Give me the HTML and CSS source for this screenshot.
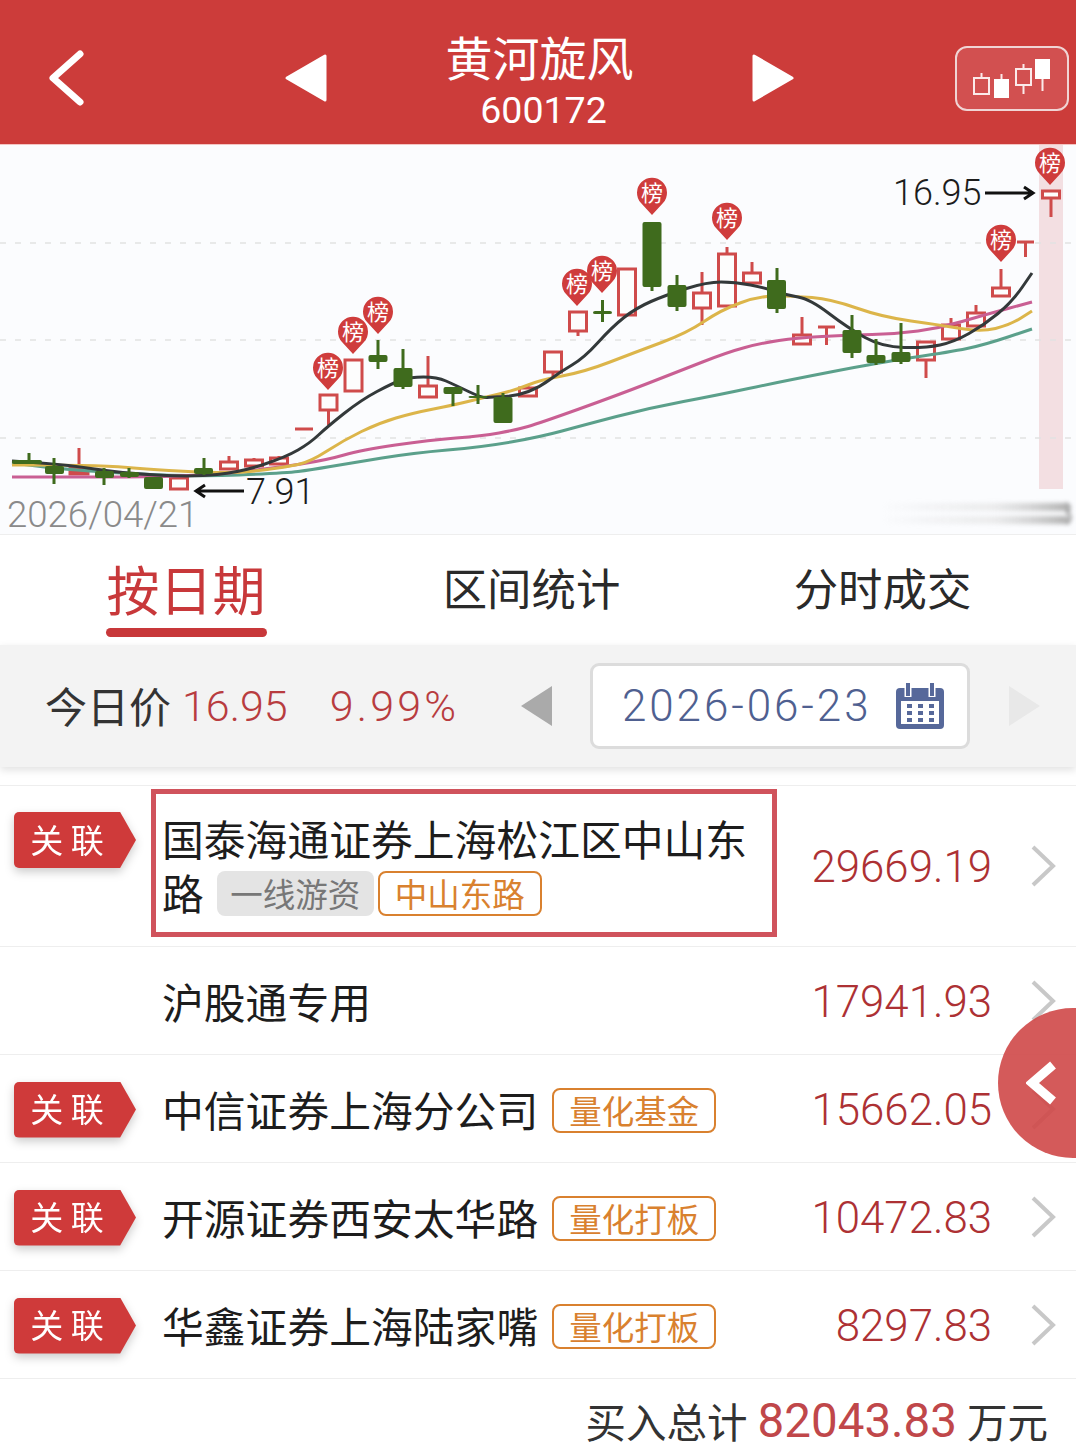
FILE: index.html
```html
<!DOCTYPE html>
<html lang="zh-CN">
<head>
    <meta charset="UTF-8">
    <meta name="viewport" content="width=device-width, initial-scale=1.0">
    <title>黄河旋风 600172</title>
    <link rel="stylesheet" href="styles.css">
</head>
<body>
    <header class="topbar">
        <svg class="back" viewBox="0 0 38 56"><path d="M33 4 6 28l27 24" /></svg>
        <svg class="tri" viewBox="0 0 43 50"><path d="M41 3v44L3 25z" /></svg>
        <div class="title">
            <div class="title-name">黄河旋风</div>
            <div class="title-code">600172</div>
        </div>
        <svg class="tri" viewBox="0 0 43 50"><path d="M2 3v44l38-22z" /></svg>
        <div class="kline-btn">
            <svg viewBox="0 0 110 61">
                <path class="kl-line" d="M24.500 25v22M44.500 26v24M66.500 16v30M85.500 20v23" />
                <rect class="kl-hollow" x="17" y="30" width="15" height="16" />
                <rect class="kl-solid" x="37" y="31" width="15" height="19" />
                <rect class="kl-hollow" x="59" y="21" width="15" height="16" />
                <rect class="kl-solid" x="78" y="11" width="15" height="20" />
            </svg>
        </div>
    </header>

    <section class="chart">
        <svg class="chart-svg" viewBox="0 145 1076 390">
            <defs>
                <linearGradient id="smear-fade">
                    <stop offset="0" stop-color="#dcdcdc" stop-opacity="0" />
                    <stop offset="0.600" stop-color="#dcdcdc" stop-opacity="0.500" />
                    <stop offset="1" stop-color="#b0b0b0" />
                </linearGradient>
            </defs>
            <rect class="band" x="1039" y="145" width="24" height="344" />
            <path class="grid" d="M0 243H1076M0 340H1076M0 438H1076" />

            <!-- candles -->
            <g class="red">
                <path d="M79 448V468M229 456V462M254 458V460M279 456V458M295 429H313M328.500 410V425M428 356V386M528 385V388M553 372V378M578 331V336M702 272V293M702 308V325M727 247V254M752 262V273M802 317V335M818 327H835M826.500 327V345M926 360V378M951 318V325M976 305V313M1001 269V288M1017 242H1034M1025.500 242V257M1051 198V217" />
                <rect class="filled" x="70" y="468" width="18" height="6" />
                <rect x="170.500" y="478" width="17" height="11" />
                <rect x="220.500" y="462" width="17" height="7" />
                <rect x="245.500" y="460" width="17" height="6" />
                <rect x="270.500" y="458" width="17" height="6" />
                <rect x="320" y="395" width="17" height="15" />
                <rect x="345" y="360" width="17" height="31" />
                <rect x="419.500" y="386" width="17" height="11" />
                <rect x="519.500" y="388" width="17" height="8" />
                <rect x="544.500" y="352" width="17" height="20" />
                <rect x="569.500" y="312" width="17" height="19" />
                <rect x="618.500" y="269" width="17" height="46" />
                <rect x="693.500" y="293" width="17" height="15" />
                <rect x="718.500" y="254" width="17" height="52" />
                <rect x="743.500" y="273" width="17" height="10" />
                <rect x="793.500" y="335" width="17" height="9" />
                <rect x="917.500" y="342" width="17" height="18" />
                <rect x="942.500" y="325" width="17" height="14" />
                <rect x="967.500" y="313" width="17" height="13" />
                <rect x="992.500" y="288" width="17" height="8" />
                <rect x="1042.500" y="191" width="17" height="7" />
            </g>

            <!-- moving averages -->
            <path class="ma ma-green" d="M12 463L40.500 466.500Q69 470 131 473.500Q193 477 239.500 475Q286 473 298 471.500Q310 470 330.500 466.500Q351 463 382 458Q413 453 447.500 450Q482 447 511 442Q540 437 562 431Q584 425 616.500 416.500Q649 408 683.500 401.500Q718 395 748.500 388.500Q779 382 830.500 372Q882 362 916 357Q950 352 967 348.500Q984 345 1008 337L1032 329" />
            <path class="ma ma-pink" d="M12 477L102.500 477Q193 477 234 472.500Q275 468 301 464Q327 460 344 455Q361 450 395.500 445Q430 440 456 438Q482 436 499 433Q516 430 528 426.500Q540 423 579 409Q618 395 647.500 383.500Q677 372 702.500 362Q728 352 745 347.500Q762 343 779 340.500Q796 338 822 336.500Q848 335 872 334.500Q896 334 918 331Q940 328 962 321.500Q984 315 1008 308.500L1032 302" />
            <path class="ma ma-yellow" d="M12 465L32 465Q52 465 81 465.500Q110 466 127.500 467.500Q145 469 169 470.500Q193 472 217 472.500Q241 473 263.500 470Q286 467 298 464.500Q310 462 327 451Q344 440 361.500 431.500Q379 423 396 418Q413 413 433.500 409Q454 405 468 401.500Q482 398 499 394Q516 390 528 385Q540 380 562 376Q584 372 610 362Q636 352 661.500 342.500Q687 333 704 321.500Q721 310 740 303Q759 296 776 296Q793 296 812 297.500Q831 299 856.500 308Q882 317 911 321Q940 325 960.500 328.500Q981 332 995.500 328.500Q1010 325 1021 318L1032 311" />
            <path class="ma ma-black" d="M12 461L40.500 463Q69 465 94.500 469Q120 473 156.500 475Q193 477 217 474.500Q241 472 263.500 464.500Q286 457 298 450Q310 443 318.500 435Q327 427 344 413.500Q361 400 377 391.500Q393 383 401.500 380Q410 377 423.500 377Q437 377 446 381Q455 385 468.500 391.500Q482 398 487 397.500Q492 397 504.500 396.500Q517 396 528.500 391.500Q540 387 550 379.500Q560 372 572 365Q584 358 598 342.500Q612 327 624 317.500Q636 308 651 301.500Q666 295 686.500 288.500Q707 282 721 282Q735 282 750.500 285Q766 288 776 291.500Q786 295 798 297Q810 299 829 313.500Q848 328 865 337.500Q882 347 904 347.500Q926 348 940 345Q954 342 969 333.500Q984 325 998 313.500Q1012 302 1022 287.500L1032 273" />

            <g class="green">
                <path d="M29 453V463M54 458V484M104 468V485M129 468V478M204 458V475M378 340V369M403 349V389M453 394V406M478 385V404M503 393V397M602.500 300V322M652 287V291M677 275V311M777 268V313M852 315V358M876 339V365M901 323V364" />
                <rect x="12" y="460" width="30" height="4" />
                <rect x="45" y="466" width="19" height="8" />
                <rect x="95" y="471" width="19" height="7" />
                <rect x="120" y="472" width="19" height="5" />
                <rect x="144" y="477" width="19" height="12" />
                <rect x="194" y="468" width="19" height="6" />
                <rect x="368.500" y="355" width="19" height="7" />
                <rect x="393.500" y="368" width="19" height="19" />
                <rect x="443.500" y="387" width="19" height="7" />
                <rect x="468.500" y="396" width="19" height="2" />
                <rect x="493.500" y="397" width="19" height="26" />
                <rect x="593" y="311" width="19" height="3" />
                <rect x="642.500" y="222" width="19" height="65" />
                <rect x="667.500" y="285" width="19" height="22" />
                <rect x="767" y="280" width="19" height="29" />
                <rect x="842.500" y="330" width="19" height="23" />
                <rect x="866.500" y="355" width="19" height="8" />
                <rect x="891.500" y="352" width="19" height="10" />
            </g>

            <!-- 龙虎榜 markers -->
            <g class="pin" transform="translate(328 368)"><path d="M0 22-11 10A15 15 0 1 1 11 10Z" /><text y="7.500">榜</text></g>
            <g class="pin" transform="translate(353 332)"><path d="M0 22-11 10A15 15 0 1 1 11 10Z" /><text y="7.500">榜</text></g>
            <g class="pin" transform="translate(378 312)"><path d="M0 22-11 10A15 15 0 1 1 11 10Z" /><text y="7.500">榜</text></g>
            <g class="pin" transform="translate(577 284)"><path d="M0 22-11 10A15 15 0 1 1 11 10Z" /><text y="7.500">榜</text></g>
            <g class="pin" transform="translate(602 271)"><path d="M0 22-11 10A15 15 0 1 1 11 10Z" /><text y="7.500">榜</text></g>
            <g class="pin" transform="translate(652 193)"><path d="M0 22-11 10A15 15 0 1 1 11 10Z" /><text y="7.500">榜</text></g>
            <g class="pin" transform="translate(727 218)"><path d="M0 22-11 10A15 15 0 1 1 11 10Z" /><text y="7.500">榜</text></g>
            <g class="pin" transform="translate(1001 240)"><path d="M0 22-11 10A15 15 0 1 1 11 10Z" /><text y="7.500">榜</text></g>
            <g class="pin" transform="translate(1050 163)"><path d="M0 22-11 10A15 15 0 1 1 11 10Z" /><text y="7.500">榜</text></g>

            <!-- price labels -->
            <text class="price-mark" x="893" y="205">16.95</text>
            <path class="arrow" d="M985 193H1032M1024 187l9 6-9 6" />
            <text class="price-mark" x="246" y="504">7.91</text>
            <path class="arrow" d="M244 491H197M205 485l-9 6 9 6" />
            <text class="date-mark" x="7" y="527">2026/04/21</text>
            <g class="smear">
                <rect x="880" y="503" width="188" height="8" fill="url(#smear-fade)" />
                <rect x="880" y="516" width="188" height="8" fill="url(#smear-fade)" />
                <path d="M1066 503q7 4 1 9q7 5 0 12" />
            </g>
        </svg>
    </section>

    <nav class="tabs">
        <div class="tab tab-active">按日期</div>
        <div class="tab">区间统计</div>
        <div class="tab">分时成交</div>
    </nav>

    <section class="pricebar">
        <div class="today">
            <span class="today-label">今日价</span>
            <span class="today-num">16.95</span>
            <span class="today-num today-pct">9.99%</span>
        </div>
        <svg class="date-arrow" viewBox="0 0 31 40"><path class="arrow-on" d="M31 0v40L0 20z" /></svg>
        <div class="datebox">
            <span class="datebox-text">2026-06-23</span>
            <svg class="calendar" viewBox="0 0 48 46">
                <path class="cal-body" d="M4 5h40a4 4 0 0 1 4 4v33a4 4 0 0 1-4 4H4a4 4 0 0 1-4-4V9a4 4 0 0 1 4-4z" />
                <rect class="cal-page" x="5" y="18" width="38" height="23" />
                <path class="cal-ring-bg" d="M12 0v14M36 0v14" />
                <path class="cal-ring" d="M12 0v13M36 0v13" />
                <path class="cal-dots" d="M11 21h5v4h-5zM22 21h5v4h-5zM33 21h5v4h-5zM11 28h5v4h-5zM22 28h5v4h-5zM33 28h5v4h-5zM11 35h5v4h-5zM22 35h5v4h-5zM33 35h5v4h-5z" />
            </svg>
        </div>
        <svg class="date-arrow" viewBox="0 0 31 40"><path class="arrow-off" d="M0 0v40l31-20z" /></svg>
    </section>

    <section class="list">
        <div class="row row-first">
            <div class="badge-col"><span class="badge badge-top">关 联</span></div>
            <div class="name name-boxed">国泰海通证券上海松江区中山东<br>路<span class="tag tag-gray">一线游资</span><span class="tag tag-orange">中山东路</span></div>
            <div class="amount">29669.19</div>
            <svg class="chev" viewBox="0 0 26 42"><path d="M3 2l20 19L3 40" /></svg>
        </div>
        <div class="row">
            <div class="badge-col"></div>
            <div class="name">沪股通专用</div>
            <div class="amount">17941.93</div>
            <svg class="chev" viewBox="0 0 26 42"><path d="M3 2l20 19L3 40" /></svg>
        </div>
        <div class="row">
            <div class="badge-col"><span class="badge">关 联</span></div>
            <div class="name">中信证券上海分公司<span class="tag tag-orange tag-wide">量化基金</span></div>
            <div class="amount">15662.05</div>
            <svg class="chev" viewBox="0 0 26 42"><path d="M3 2l20 19L3 40" /></svg>
        </div>
        <div class="row">
            <div class="badge-col"><span class="badge">关 联</span></div>
            <div class="name">开源证券西安太华路<span class="tag tag-orange tag-wide">量化打板</span></div>
            <div class="amount">10472.83</div>
            <svg class="chev" viewBox="0 0 26 42"><path d="M3 2l20 19L3 40" /></svg>
        </div>
        <div class="row">
            <div class="badge-col"><span class="badge">关 联</span></div>
            <div class="name">华鑫证券上海陆家嘴<span class="tag tag-orange tag-wide">量化打板</span></div>
            <div class="amount">8297.83</div>
            <svg class="chev" viewBox="0 0 26 42"><path d="M3 2l20 19L3 40" /></svg>
        </div>
    </section>

    <footer class="total">
        <span>买入总计</span>
        <span class="total-num">82043.83</span>
        <span>万元</span>
    </footer>

    <div class="float-btn">
        <svg viewBox="0 0 30 44"><path d="M27 4 6 22l21 18" /></svg>
    </div>
</body>
</html>
```

FILE: styles.css
```css
html, body {
    margin: 0;
    padding: 0;
}

body {
    position: relative;
    width: 1076px;
    height: 1448px;
    overflow: hidden;
    background-color: #fff;
    color: #222;
    font-family: "Roboto", "Noto Sans CJK SC", sans-serif;
}

/* top bar */
.topbar {
    display: flex;
    align-items: center;
    box-sizing: border-box;
    height: 145px;
    padding: 12px 0 0 47px;
    background-color: #cc3c3a;
    border-bottom: 1px solid #f4c4c2;
    color: #fff;
}

.back {
    width: 38px;
    height: 56px;
    margin-right: 199px;
}

.back path {
    fill: none;
    stroke: #fff;
    stroke-width: 7;
    stroke-linecap: round;
    stroke-linejoin: round;
}

.tri {
    width: 43px;
    height: 50px;
}

.tri path {
    fill: #fff;
    stroke: #fff;
    stroke-width: 3;
    stroke-linejoin: round;
}

.title {
    width: 425px;
    margin-top: 2px;
    text-align: center;
}

.title-name {
    font-size: 47px;
    line-height: 56px;
    font-family: "Noto Sans CJK SC", sans-serif;
    margin-bottom: 5px;
}

.title-code {
    padding-left: 8px;
    font-size: 37.500px;
    line-height: 42px;
}

.kline-btn {
    width: 110px;
    height: 61px;
    margin-left: 160px;
    border: 2px solid #f0d4d4;
    border-radius: 12px;
    background-color: #d25050;
}

.kline-btn svg {
    display: block;
    width: 110px;
    height: 61px;
}

.kl-line {
    fill: none;
    stroke: #fbeaea;
    stroke-width: 2;
}

.kl-hollow {
    fill: #d25050;
    stroke: #fbeaea;
    stroke-width: 2;
}

.kl-solid {
    fill: #fff;
}

/* chart */
.chart {
    height: 389px;
    background-color: #fbfcfe;
    border-bottom: 1px solid #eee;
}

.chart-svg {
    display: block;
    width: 1076px;
    height: 390px;
}

.band {
    fill: #f3dfe2;
}

.grid {
    fill: none;
    stroke: #e2e2e2;
    stroke-width: 1.500;
    stroke-dasharray: 6 9;
}

.red path {
    fill: none;
    stroke: #cf4b4b;
    stroke-width: 3;
}

.red rect {
    fill: #fdfdfd;
    stroke: #cf4b4b;
    stroke-width: 3;
}

.red rect.filled {
    fill: #cf4b4b;
}

.green path {
    fill: none;
    stroke: #3f6b1d;
    stroke-width: 3;
}

.green rect {
    fill: #3f6b1d;
    rx: 2px;
}

.ma {
    fill: none;
    stroke-width: 3;
    stroke-linejoin: round;
}

.ma-black {
    stroke: #33393a;
}

.ma-yellow {
    stroke: #dcb54a;
}

.ma-pink {
    stroke: #c95f93;
}

.ma-green {
    stroke: #5ba08b;
}

.pin path {
    fill: #cf3c3c;
}

.pin text {
    fill: #fff;
    font-family: "Noto Sans CJK SC", sans-serif;
    font-size: 22px;
    text-anchor: middle;
}

.price-mark {
    fill: #1c1c1c;
    font-size: 36px;
    font-weight: 300;
}

.date-mark {
    fill: #8a8a8a;
    font-size: 36.600px;
    font-weight: 300;
}

.arrow {
    fill: none;
    stroke: #111;
    stroke-width: 3;
}

.smear {
    filter: blur(2px);
}

.smear path {
    fill: none;
    stroke: #888;
    stroke-width: 2;
}

/* tabs */
.tabs {
    display: grid;
    grid-template-columns: 372px 319px 383px;
    height: 110px;
}

.tab {
    position: relative;
    padding-top: 22px;
    text-align: center;
    font-family: "Noto Sans CJK SC", sans-serif;
    font-size: 44.400px;
    line-height: 60px;
    color: #2a2a2a;
}

.tab-active {
    padding-top: 23px;
    font-size: 53px;
    color: #c8383a;
}

.tab-active::after {
    content: "";
    position: absolute;
    left: 106px;
    top: 93px;
    width: 161px;
    height: 9px;
    border-radius: 5px;
    background-color: #c8383a;
}

/* price bar */
.pricebar {
    display: flex;
    align-items: center;
    height: 122px;
    padding-left: 45px;
    background-color: #f3f3f3;
    box-shadow: 0 3px 8px rgba(0, 0, 0, 0.12);
}

.today {
    display: flex;
    align-items: center;
    width: 476px;
    height: 60px;
}

.today-label {
    margin: -4px 11px 0 0;
    font-family: "Noto Sans CJK SC", sans-serif;
    font-size: 42px;
    color: #333;
}

.today-num {
    font-size: 43px;
    font-weight: 300;
    color: #b83c3f;
}

.today-pct {
    margin-left: 42px;
    letter-spacing: 3.200px;
}

.date-arrow {
    flex: none;
    width: 31px;
    height: 40px;
}

.arrow-on {
    fill: #aaa;
}

.arrow-off {
    fill: #e8e8e8;
}

.datebox {
    display: flex;
    align-items: center;
    width: 380px;
    height: 86px;
    box-sizing: border-box;
    margin: 0 39px 0 38px;
    padding-left: 29px;
    background-color: #fff;
    border: 3px solid #dcdcdc;
    border-radius: 9px;
}

.datebox-text {
    width: 274px;
    font-size: 44px;
    font-weight: 300;
    letter-spacing: 2.900px;
    color: #4f6090;
    white-space: nowrap;
}

.calendar {
    width: 48px;
    height: 46px;
}

.cal-body {
    fill: #56689a;
}

.cal-page {
    fill: #fff;
}

.cal-ring-bg {
    fill: none;
    stroke: #fff;
    stroke-width: 7;
}

.cal-ring {
    fill: none;
    stroke: #56689a;
    stroke-width: 4;
}

.cal-dots {
    fill: #56689a;
}

/* list */
.list {
    margin-top: 18px;
    border-top: 1px solid #eee;
}

.row {
    display: flex;
    align-items: center;
    height: 107px;
    border-bottom: 1px solid #eee;
}

.row-first {
    height: 160px;
}

.badge-col {
    flex: none;
    width: 136px;
    margin-right: 15px;
    padding-left: 14px;
    box-sizing: border-box;
    filter: drop-shadow(0 4px 5px rgba(0, 0, 0, 0.2));
}

.badge {
    display: flex;
    align-items: center;
    justify-content: center;
    width: 122px;
    height: 56px;
    margin-top: 2px;
    padding: 0 16px 3px 0;
    box-sizing: border-box;
    background-color: #cf3a3a;
    border-radius: 5px 0 0 5px;
    clip-path: polygon(0 0, 87% 0, 100% 50%, 87% 100%, 0 100%);
    font-family: "Noto Sans CJK SC", sans-serif;
    font-size: 33px;
    line-height: 40px;
    color: #fff;
}

.badge-top {
    margin-top: -52px;
}

.name {
    flex: 1;
    padding-left: 11px;
    font-family: "Noto Sans CJK SC", sans-serif;
    font-size: 41.800px;
    line-height: 54px;
    color: #1d1d1d;
}

.name-boxed {
    flex: none;
    width: 626px;
    height: 148px;
    box-sizing: border-box;
    margin-top: -6px;
    padding: 17px 20px 0 6px;
    border: 5px solid #d0535c;
}

.tag {
    display: inline-block;
    box-sizing: border-box;
    height: 45px;
    margin-left: 13px;
    padding: 0 13.500px;
    border-radius: 8px;
    font-size: 32.500px;
    line-height: 40px;
    vertical-align: 3px;
}

.tag-gray {
    background-color: #e4e4e4;
    color: #777;
    line-height: 44px;
}

.tag-orange {
    margin-left: 4px;
    padding: 0 15px;
    border: 2.500px solid #d9812f;
    color: #d9812f;
}

.tag-wide {
    margin-left: 14px;
}

.amount {
    margin-left: auto;
    padding-top: 2px;
    font-size: 43.800px;
    font-weight: 300;
    color: #ad3134;
    white-space: nowrap;
}

.chev {
    flex: none;
    width: 26px;
    height: 42px;
    margin: 0 20px 0 38px;
}

.chev path {
    fill: none;
    stroke: #c8c8c8;
    stroke-width: 4;
}

/* footer */
.total {
    display: flex;
    align-items: center;
    justify-content: flex-end;
    gap: 10px;
    box-sizing: border-box;
    height: 69px;
    padding: 14px 28px 0 0;
    font-family: "Noto Sans CJK SC", sans-serif;
    font-size: 40.500px;
    line-height: 50px;
    color: #333;
}

.total-num {
    font-family: "Roboto", sans-serif;
    font-size: 47.500px;
    color: #c0474a;
}

/* floating collapse button */
.float-btn {
    position: absolute;
    left: 998px;
    top: 1008px;
    display: flex;
    align-items: center;
    width: 78px;
    height: 150px;
    padding-left: 28px;
    box-sizing: border-box;
    border-radius: 75px 0 0 75px;
    background-color: rgba(207, 72, 72, 0.9);
}

.float-btn svg {
    width: 30px;
    height: 44px;
}

.float-btn path {
    fill: none;
    stroke: #fff;
    stroke-width: 9;
}
```
